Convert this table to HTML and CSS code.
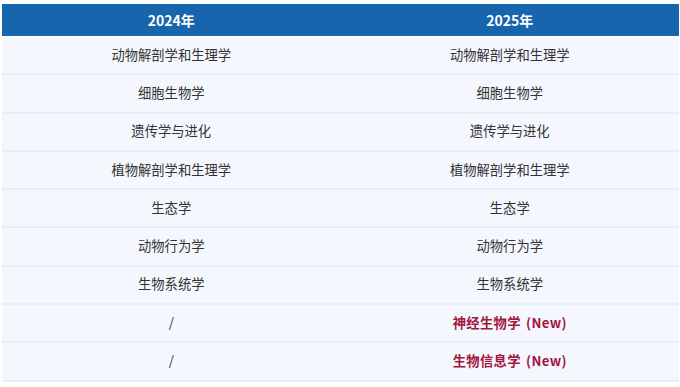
FILE: index.html
```html
<!DOCTYPE html>
<html lang="zh">
<head>
<meta charset="utf-8">
<link rel="stylesheet" href="styles.css">
</head>
<body>
<table class="cmp">
  <thead>
    <tr><th>2024年</th><th>2025年</th></tr>
  </thead>
  <tbody>
    <tr><td>动物解剖学和生理学</td><td>动物解剖学和生理学</td></tr>
    <tr><td>细胞生物学</td><td>细胞生物学</td></tr>
    <tr><td>遗传学与进化</td><td>遗传学与进化</td></tr>
    <tr><td>植物解剖学和生理学</td><td>植物解剖学和生理学</td></tr>
    <tr><td>生态学</td><td>生态学</td></tr>
    <tr><td>动物行为学</td><td>动物行为学</td></tr>
    <tr><td>生物系统学</td><td>生物系统学</td></tr>
    <tr><td>/</td><td class="new">神经生物学 (New)</td></tr>
    <tr><td>/</td><td class="new">生物信息学 (New)</td></tr>
  </tbody>
</table>
</body>
</html>
```
FILE: styles.css
```css
html, body {
  margin: 0;
  padding: 0;
  background: #ffffff;
}
body {
  padding: 4px 1px 0 2px;
  font-family: "Noto Sans CJK SC", "Noto Sans", sans-serif;
}
.cmp {
  width: 677px;
  border-collapse: collapse;
  table-layout: fixed;
}
.cmp th {
  background: #1766ad;
  color: #ffffff;
  font-size: 14px;
  font-weight: 700;
  line-height: 18px;
  height: 31px;
  padding: 0 0 1px;
  text-align: center;
  vertical-align: middle;
}
.cmp td {
  background: #f4f8fe;
  color: #333333;
  font-size: 13.3px;
  line-height: 18px;
  height: 35.3px;
  padding: 0 0 1px;
  text-align: center;
  vertical-align: middle;
  border-bottom: 2px solid #e6eef8;
}
.cmp tbody tr:first-child td {
  border-top: 1px solid #ffffff;
}
.cmp td.new {
  color: #a3163e;
  font-weight: 700;
  letter-spacing: 0.3px;
  word-spacing: 2px;
}
```
